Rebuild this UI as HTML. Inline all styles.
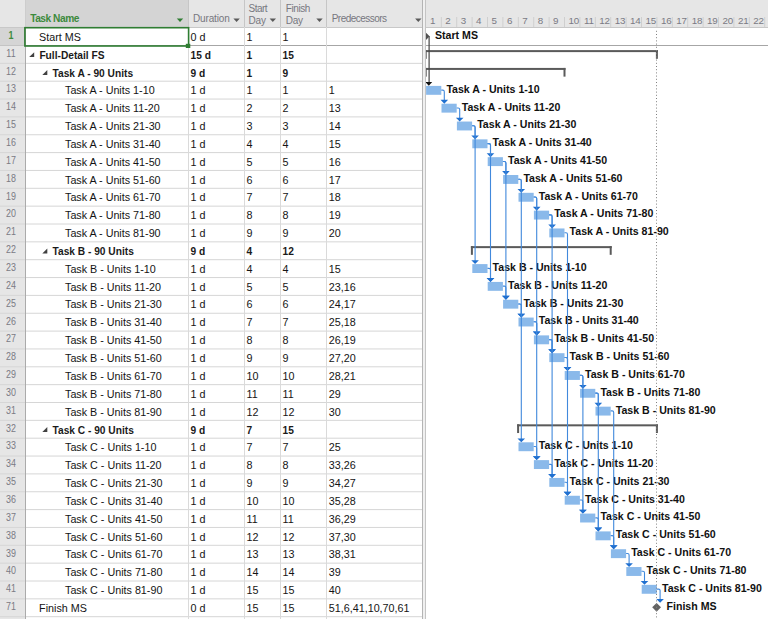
<!DOCTYPE html><html><head><meta charset="utf-8"><style>
*{margin:0;padding:0;box-sizing:border-box}
html,body{width:768px;height:619px;overflow:hidden;background:#fff;position:relative}
body{font-family:"Liberation Sans",sans-serif;}
.t{position:absolute;white-space:nowrap;line-height:14px;height:14px}
.n{font-size:10.75px;color:#141414}
.b{font-size:10.2px;font-weight:bold;color:#1a1a1a}
.id{font-size:10.5px;color:#7a7a84;width:22px;text-align:center;transform:scaleX(0.85);transform-origin:11px 0}
.h{font-size:10px;color:#77777f}
.g{font-size:10.6px;font-weight:bold;color:#111}
svg{position:absolute;left:0;top:0}
</style></head><body>
<svg width="768" height="619" viewBox="0 0 768 619"><rect x="0.00" y="0.00" width="768.00" height="27.00" fill="#e6e6e6" /><rect x="25.00" y="0.00" width="163.00" height="27.00" fill="#d4d4d4" /><rect x="0.00" y="27.00" width="25.00" height="592.00" fill="#e6e6e6" /><rect x="0.00" y="27.00" width="25.00" height="18.00" fill="#d5d5d5" /><line x1="0.00" y1="45.50" x2="422.00" y2="45.50" stroke="#d6d6d6" stroke-width="1" /><line x1="0.00" y1="63.35" x2="422.00" y2="63.35" stroke="#d6d6d6" stroke-width="1" /><line x1="0.00" y1="81.20" x2="422.00" y2="81.20" stroke="#d6d6d6" stroke-width="1" /><line x1="0.00" y1="99.05" x2="422.00" y2="99.05" stroke="#d6d6d6" stroke-width="1" /><line x1="0.00" y1="116.90" x2="422.00" y2="116.90" stroke="#d6d6d6" stroke-width="1" /><line x1="0.00" y1="134.75" x2="422.00" y2="134.75" stroke="#d6d6d6" stroke-width="1" /><line x1="0.00" y1="152.60" x2="422.00" y2="152.60" stroke="#d6d6d6" stroke-width="1" /><line x1="0.00" y1="170.45" x2="422.00" y2="170.45" stroke="#d6d6d6" stroke-width="1" /><line x1="0.00" y1="188.30" x2="422.00" y2="188.30" stroke="#d6d6d6" stroke-width="1" /><line x1="0.00" y1="206.15" x2="422.00" y2="206.15" stroke="#d6d6d6" stroke-width="1" /><line x1="0.00" y1="224.00" x2="422.00" y2="224.00" stroke="#d6d6d6" stroke-width="1" /><line x1="0.00" y1="241.85" x2="422.00" y2="241.85" stroke="#d6d6d6" stroke-width="1" /><line x1="0.00" y1="259.70" x2="422.00" y2="259.70" stroke="#d6d6d6" stroke-width="1" /><line x1="0.00" y1="277.55" x2="422.00" y2="277.55" stroke="#d6d6d6" stroke-width="1" /><line x1="0.00" y1="295.40" x2="422.00" y2="295.40" stroke="#d6d6d6" stroke-width="1" /><line x1="0.00" y1="313.25" x2="422.00" y2="313.25" stroke="#d6d6d6" stroke-width="1" /><line x1="0.00" y1="331.10" x2="422.00" y2="331.10" stroke="#d6d6d6" stroke-width="1" /><line x1="0.00" y1="348.95" x2="422.00" y2="348.95" stroke="#d6d6d6" stroke-width="1" /><line x1="0.00" y1="366.80" x2="422.00" y2="366.80" stroke="#d6d6d6" stroke-width="1" /><line x1="0.00" y1="384.65" x2="422.00" y2="384.65" stroke="#d6d6d6" stroke-width="1" /><line x1="0.00" y1="402.50" x2="422.00" y2="402.50" stroke="#d6d6d6" stroke-width="1" /><line x1="0.00" y1="420.35" x2="422.00" y2="420.35" stroke="#d6d6d6" stroke-width="1" /><line x1="0.00" y1="438.20" x2="422.00" y2="438.20" stroke="#d6d6d6" stroke-width="1" /><line x1="0.00" y1="456.05" x2="422.00" y2="456.05" stroke="#d6d6d6" stroke-width="1" /><line x1="0.00" y1="473.90" x2="422.00" y2="473.90" stroke="#d6d6d6" stroke-width="1" /><line x1="0.00" y1="491.75" x2="422.00" y2="491.75" stroke="#d6d6d6" stroke-width="1" /><line x1="0.00" y1="509.60" x2="422.00" y2="509.60" stroke="#d6d6d6" stroke-width="1" /><line x1="0.00" y1="527.45" x2="422.00" y2="527.45" stroke="#d6d6d6" stroke-width="1" /><line x1="0.00" y1="545.30" x2="422.00" y2="545.30" stroke="#d6d6d6" stroke-width="1" /><line x1="0.00" y1="563.15" x2="422.00" y2="563.15" stroke="#d6d6d6" stroke-width="1" /><line x1="0.00" y1="581.00" x2="422.00" y2="581.00" stroke="#d6d6d6" stroke-width="1" /><line x1="0.00" y1="598.85" x2="422.00" y2="598.85" stroke="#d6d6d6" stroke-width="1" /><line x1="0.00" y1="616.70" x2="422.00" y2="616.70" stroke="#d6d6d6" stroke-width="1" /><line x1="0.00" y1="634.55" x2="422.00" y2="634.55" stroke="#d6d6d6" stroke-width="1" /><line x1="0.00" y1="27.50" x2="768.00" y2="27.50" stroke="#c8c8c8" stroke-width="1" /><line x1="25.00" y1="45.50" x2="768.00" y2="45.50" stroke="#a6a6a6" stroke-width="1" /><line x1="0.00" y1="45.50" x2="25.00" y2="45.50" stroke="#c4c4c4" stroke-width="1" /><line x1="188.50" y1="27.00" x2="188.50" y2="619.00" stroke="#dadada" stroke-width="1" /><line x1="244.50" y1="27.00" x2="244.50" y2="619.00" stroke="#dadada" stroke-width="1" /><line x1="280.50" y1="27.00" x2="280.50" y2="619.00" stroke="#dadada" stroke-width="1" /><line x1="326.50" y1="27.00" x2="326.50" y2="619.00" stroke="#dadada" stroke-width="1" /><line x1="188.50" y1="0.00" x2="188.50" y2="27.00" stroke="#c6c6c6" stroke-width="1" /><line x1="244.50" y1="0.00" x2="244.50" y2="27.00" stroke="#c6c6c6" stroke-width="1" /><line x1="280.50" y1="0.00" x2="280.50" y2="27.00" stroke="#c6c6c6" stroke-width="1" /><line x1="326.50" y1="0.00" x2="326.50" y2="27.00" stroke="#c6c6c6" stroke-width="1" /><line x1="25.50" y1="27.00" x2="25.50" y2="619.00" stroke="#ababab" stroke-width="1" /><line x1="25.50" y1="0.00" x2="25.50" y2="27.00" stroke="#cdcdcd" stroke-width="1" /><rect x="422.00" y="0.00" width="4.00" height="619.00" fill="#f0f0f0" /><line x1="422.50" y1="0.00" x2="422.50" y2="619.00" stroke="#b4b4b4" stroke-width="1" /><line x1="425.50" y1="0.00" x2="425.50" y2="619.00" stroke="#c4c4c4" stroke-width="1" /><line x1="441.30" y1="17.00" x2="441.30" y2="27.00" stroke="#cfcfcf" stroke-width="1" /><line x1="456.70" y1="17.00" x2="456.70" y2="27.00" stroke="#cfcfcf" stroke-width="1" /><line x1="472.10" y1="17.00" x2="472.10" y2="27.00" stroke="#cfcfcf" stroke-width="1" /><line x1="487.50" y1="17.00" x2="487.50" y2="27.00" stroke="#cfcfcf" stroke-width="1" /><line x1="502.90" y1="17.00" x2="502.90" y2="27.00" stroke="#cfcfcf" stroke-width="1" /><line x1="518.30" y1="17.00" x2="518.30" y2="27.00" stroke="#cfcfcf" stroke-width="1" /><line x1="533.70" y1="17.00" x2="533.70" y2="27.00" stroke="#cfcfcf" stroke-width="1" /><line x1="549.10" y1="17.00" x2="549.10" y2="27.00" stroke="#cfcfcf" stroke-width="1" /><line x1="564.50" y1="17.00" x2="564.50" y2="27.00" stroke="#cfcfcf" stroke-width="1" /><line x1="579.90" y1="17.00" x2="579.90" y2="27.00" stroke="#cfcfcf" stroke-width="1" /><line x1="595.30" y1="17.00" x2="595.30" y2="27.00" stroke="#cfcfcf" stroke-width="1" /><line x1="610.70" y1="17.00" x2="610.70" y2="27.00" stroke="#cfcfcf" stroke-width="1" /><line x1="626.10" y1="17.00" x2="626.10" y2="27.00" stroke="#cfcfcf" stroke-width="1" /><line x1="641.50" y1="17.00" x2="641.50" y2="27.00" stroke="#cfcfcf" stroke-width="1" /><line x1="656.90" y1="17.00" x2="656.90" y2="27.00" stroke="#cfcfcf" stroke-width="1" /><line x1="672.30" y1="17.00" x2="672.30" y2="27.00" stroke="#cfcfcf" stroke-width="1" /><line x1="687.70" y1="17.00" x2="687.70" y2="27.00" stroke="#cfcfcf" stroke-width="1" /><line x1="703.10" y1="17.00" x2="703.10" y2="27.00" stroke="#cfcfcf" stroke-width="1" /><line x1="718.50" y1="17.00" x2="718.50" y2="27.00" stroke="#cfcfcf" stroke-width="1" /><line x1="733.90" y1="17.00" x2="733.90" y2="27.00" stroke="#cfcfcf" stroke-width="1" /><line x1="749.30" y1="17.00" x2="749.30" y2="27.00" stroke="#cfcfcf" stroke-width="1" /><line x1="764.70" y1="17.00" x2="764.70" y2="27.00" stroke="#cfcfcf" stroke-width="1" /><rect x="24.9" y="27.7" width="163.7" height="18.3" fill="none" stroke="#2f7d32" stroke-width="1.6"/><rect x="185.80" y="43.80" width="4.50" height="4.20" fill="#2f7d32" /><defs><clipPath id="gc"><rect x="426" y="28" width="342" height="591"/></clipPath></defs><g clip-path="url(#gc)"><rect x="424.70" y="50.11" width="233.20" height="2.00" fill="#5a5a5a" /><rect x="424.70" y="50.11" width="2.00" height="8.70" fill="#5a5a5a" /><rect x="655.90" y="50.11" width="2.00" height="8.70" fill="#5a5a5a" /><rect x="424.70" y="67.93" width="140.80" height="2.00" fill="#5a5a5a" /><rect x="424.70" y="67.93" width="2.00" height="8.70" fill="#5a5a5a" /><rect x="563.50" y="67.93" width="2.00" height="8.70" fill="#5a5a5a" /><rect x="470.90" y="246.13" width="140.80" height="2.00" fill="#5a5a5a" /><rect x="470.90" y="246.13" width="2.00" height="8.70" fill="#5a5a5a" /><rect x="609.70" y="246.13" width="2.00" height="8.70" fill="#5a5a5a" /><rect x="517.10" y="424.33" width="140.80" height="2.00" fill="#5a5a5a" /><rect x="517.10" y="424.33" width="2.00" height="8.70" fill="#5a5a5a" /><rect x="655.90" y="424.33" width="2.00" height="8.70" fill="#5a5a5a" /><rect x="426.10" y="85.90" width="15.20" height="8.90" fill="#8ab9ea" /><rect x="441.50" y="103.72" width="15.20" height="8.90" fill="#8ab9ea" /><rect x="456.90" y="121.54" width="15.20" height="8.90" fill="#8ab9ea" /><rect x="472.30" y="139.36" width="15.20" height="8.90" fill="#8ab9ea" /><rect x="487.70" y="157.18" width="15.20" height="8.90" fill="#8ab9ea" /><rect x="503.10" y="175.00" width="15.20" height="8.90" fill="#8ab9ea" /><rect x="518.50" y="192.82" width="15.20" height="8.90" fill="#8ab9ea" /><rect x="533.90" y="210.64" width="15.20" height="8.90" fill="#8ab9ea" /><rect x="549.30" y="228.46" width="15.20" height="8.90" fill="#8ab9ea" /><rect x="472.30" y="264.10" width="15.20" height="8.90" fill="#8ab9ea" /><rect x="487.70" y="281.92" width="15.20" height="8.90" fill="#8ab9ea" /><rect x="503.10" y="299.74" width="15.20" height="8.90" fill="#8ab9ea" /><rect x="518.50" y="317.56" width="15.20" height="8.90" fill="#8ab9ea" /><rect x="533.90" y="335.38" width="15.20" height="8.90" fill="#8ab9ea" /><rect x="549.30" y="353.20" width="15.20" height="8.90" fill="#8ab9ea" /><rect x="564.70" y="371.02" width="15.20" height="8.90" fill="#8ab9ea" /><rect x="580.10" y="388.84" width="15.20" height="8.90" fill="#8ab9ea" /><rect x="595.50" y="406.66" width="15.20" height="8.90" fill="#8ab9ea" /><rect x="518.50" y="442.30" width="15.20" height="8.90" fill="#8ab9ea" /><rect x="533.90" y="460.12" width="15.20" height="8.90" fill="#8ab9ea" /><rect x="549.30" y="477.94" width="15.20" height="8.90" fill="#8ab9ea" /><rect x="564.70" y="495.76" width="15.20" height="8.90" fill="#8ab9ea" /><rect x="580.10" y="513.58" width="15.20" height="8.90" fill="#8ab9ea" /><rect x="595.50" y="531.40" width="15.20" height="8.90" fill="#8ab9ea" /><rect x="610.90" y="549.22" width="15.20" height="8.90" fill="#8ab9ea" /><rect x="626.30" y="567.04" width="15.20" height="8.90" fill="#8ab9ea" /><rect x="641.70" y="584.86" width="15.20" height="8.90" fill="#8ab9ea" /></g></svg>
<div class="t h" style="left:30.20px;top:11.50px;font-weight:bold;color:#3c8a3c;font-size:10.2px;letter-spacing:-0.48px">Task Name</div>
<div class="t h" style="left:193.00px;top:11.50px;letter-spacing:-0.15px">Duration</div>
<div class="t h" style="left:248.50px;top:1.60px;letter-spacing:-0.52px">Start</div>
<div class="t h" style="left:248.50px;top:14.10px;letter-spacing:-0.2px">Day</div>
<div class="t h" style="left:285.70px;top:1.60px;letter-spacing:-0.4px">Finish</div>
<div class="t h" style="left:285.70px;top:14.10px;letter-spacing:-0.2px">Day</div>
<div class="t h" style="left:331.70px;top:11.50px;letter-spacing:-0.52px">Predecessors</div>
<div class="t" style="left:429.90px;top:13.6px;font-size:9.8px;letter-spacing:-0.2px;color:#7a7a84">1</div>
<div class="t" style="left:445.30px;top:13.6px;font-size:9.8px;letter-spacing:-0.2px;color:#7a7a84">2</div>
<div class="t" style="left:460.70px;top:13.6px;font-size:9.8px;letter-spacing:-0.2px;color:#7a7a84">3</div>
<div class="t" style="left:476.10px;top:13.6px;font-size:9.8px;letter-spacing:-0.2px;color:#7a7a84">4</div>
<div class="t" style="left:491.50px;top:13.6px;font-size:9.8px;letter-spacing:-0.2px;color:#7a7a84">5</div>
<div class="t" style="left:506.90px;top:13.6px;font-size:9.8px;letter-spacing:-0.2px;color:#7a7a84">6</div>
<div class="t" style="left:522.30px;top:13.6px;font-size:9.8px;letter-spacing:-0.2px;color:#7a7a84">7</div>
<div class="t" style="left:537.70px;top:13.6px;font-size:9.8px;letter-spacing:-0.2px;color:#7a7a84">8</div>
<div class="t" style="left:553.10px;top:13.6px;font-size:9.8px;letter-spacing:-0.2px;color:#7a7a84">9</div>
<div class="t" style="left:568.50px;top:13.6px;font-size:9.8px;letter-spacing:-0.2px;color:#7a7a84">10</div>
<div class="t" style="left:583.90px;top:13.6px;font-size:9.8px;letter-spacing:-0.2px;color:#7a7a84">11</div>
<div class="t" style="left:599.30px;top:13.6px;font-size:9.8px;letter-spacing:-0.2px;color:#7a7a84">12</div>
<div class="t" style="left:614.70px;top:13.6px;font-size:9.8px;letter-spacing:-0.2px;color:#7a7a84">13</div>
<div class="t" style="left:630.10px;top:13.6px;font-size:9.8px;letter-spacing:-0.2px;color:#7a7a84">14</div>
<div class="t" style="left:645.50px;top:13.6px;font-size:9.8px;letter-spacing:-0.2px;color:#7a7a84">15</div>
<div class="t" style="left:660.90px;top:13.6px;font-size:9.8px;letter-spacing:-0.2px;color:#7a7a84">16</div>
<div class="t" style="left:676.30px;top:13.6px;font-size:9.8px;letter-spacing:-0.2px;color:#7a7a84">17</div>
<div class="t" style="left:691.70px;top:13.6px;font-size:9.8px;letter-spacing:-0.2px;color:#7a7a84">18</div>
<div class="t" style="left:707.10px;top:13.6px;font-size:9.8px;letter-spacing:-0.2px;color:#7a7a84">19</div>
<div class="t" style="left:722.50px;top:13.6px;font-size:9.8px;letter-spacing:-0.2px;color:#7a7a84">20</div>
<div class="t" style="left:737.90px;top:13.6px;font-size:9.8px;letter-spacing:-0.2px;color:#7a7a84">21</div>
<div class="t" style="left:753.30px;top:13.6px;font-size:9.8px;letter-spacing:-0.2px;color:#7a7a84">22</div>
<div class="t id" style="left:0.00px;top:27.90px;color:#3c8a3c;font-weight:bold">1</div>
<div class="t n" style="left:39.10px;top:29.70px;">Start MS</div>
<div class="t n" style="left:190.60px;top:29.70px;">0 d</div>
<div class="t n" style="left:246.50px;top:29.70px;">1</div>
<div class="t n" style="left:282.60px;top:29.70px;">1</div>
<div class="t g" style="left:435.00px;top:28.29px;">Start MS</div>
<div class="t id" style="left:0.00px;top:45.75px;">11</div>
<div class="t b" style="left:39.40px;top:48.75px;">Full-Detail FS</div>
<div class="t b" style="left:190.60px;top:48.75px;">15 d</div>
<div class="t b" style="left:246.50px;top:48.75px;">1</div>
<div class="t b" style="left:282.60px;top:48.75px;">15</div>
<div class="t id" style="left:0.00px;top:63.60px;">12</div>
<div class="t b" style="left:52.50px;top:66.60px;">Task A - 90 Units</div>
<div class="t b" style="left:190.60px;top:66.60px;">9 d</div>
<div class="t b" style="left:246.50px;top:66.60px;">1</div>
<div class="t b" style="left:282.60px;top:66.60px;">9</div>
<div class="t id" style="left:0.00px;top:81.45px;">13</div>
<div class="t n" style="left:65.00px;top:83.25px;">Task A - Units 1-10</div>
<div class="t n" style="left:190.60px;top:83.25px;">1 d</div>
<div class="t n" style="left:246.50px;top:83.25px;">1</div>
<div class="t n" style="left:282.60px;top:83.25px;">1</div>
<div class="t n" style="left:328.80px;top:83.25px;">1</div>
<div class="t g" style="left:446.40px;top:81.75px;">Task A - Units 1-10</div>
<div class="t id" style="left:0.00px;top:99.30px;">14</div>
<div class="t n" style="left:65.00px;top:101.10px;">Task A - Units 11-20</div>
<div class="t n" style="left:190.60px;top:101.10px;">1 d</div>
<div class="t n" style="left:246.50px;top:101.10px;">2</div>
<div class="t n" style="left:282.60px;top:101.10px;">2</div>
<div class="t n" style="left:328.80px;top:101.10px;">13</div>
<div class="t g" style="left:461.80px;top:99.57px;">Task A - Units 11-20</div>
<div class="t id" style="left:0.00px;top:117.15px;">15</div>
<div class="t n" style="left:65.00px;top:118.95px;">Task A - Units 21-30</div>
<div class="t n" style="left:190.60px;top:118.95px;">1 d</div>
<div class="t n" style="left:246.50px;top:118.95px;">3</div>
<div class="t n" style="left:282.60px;top:118.95px;">3</div>
<div class="t n" style="left:328.80px;top:118.95px;">14</div>
<div class="t g" style="left:477.20px;top:117.39px;">Task A - Units 21-30</div>
<div class="t id" style="left:0.00px;top:135.00px;">16</div>
<div class="t n" style="left:65.00px;top:136.80px;">Task A - Units 31-40</div>
<div class="t n" style="left:190.60px;top:136.80px;">1 d</div>
<div class="t n" style="left:246.50px;top:136.80px;">4</div>
<div class="t n" style="left:282.60px;top:136.80px;">4</div>
<div class="t n" style="left:328.80px;top:136.80px;">15</div>
<div class="t g" style="left:492.60px;top:135.21px;">Task A - Units 31-40</div>
<div class="t id" style="left:0.00px;top:152.85px;">17</div>
<div class="t n" style="left:65.00px;top:154.65px;">Task A - Units 41-50</div>
<div class="t n" style="left:190.60px;top:154.65px;">1 d</div>
<div class="t n" style="left:246.50px;top:154.65px;">5</div>
<div class="t n" style="left:282.60px;top:154.65px;">5</div>
<div class="t n" style="left:328.80px;top:154.65px;">16</div>
<div class="t g" style="left:508.00px;top:153.03px;">Task A - Units 41-50</div>
<div class="t id" style="left:0.00px;top:170.70px;">18</div>
<div class="t n" style="left:65.00px;top:172.50px;">Task A - Units 51-60</div>
<div class="t n" style="left:190.60px;top:172.50px;">1 d</div>
<div class="t n" style="left:246.50px;top:172.50px;">6</div>
<div class="t n" style="left:282.60px;top:172.50px;">6</div>
<div class="t n" style="left:328.80px;top:172.50px;">17</div>
<div class="t g" style="left:523.40px;top:170.85px;">Task A - Units 51-60</div>
<div class="t id" style="left:0.00px;top:188.55px;">19</div>
<div class="t n" style="left:65.00px;top:190.35px;">Task A - Units 61-70</div>
<div class="t n" style="left:190.60px;top:190.35px;">1 d</div>
<div class="t n" style="left:246.50px;top:190.35px;">7</div>
<div class="t n" style="left:282.60px;top:190.35px;">7</div>
<div class="t n" style="left:328.80px;top:190.35px;">18</div>
<div class="t g" style="left:538.80px;top:188.67px;">Task A - Units 61-70</div>
<div class="t id" style="left:0.00px;top:206.40px;">20</div>
<div class="t n" style="left:65.00px;top:208.20px;">Task A - Units 71-80</div>
<div class="t n" style="left:190.60px;top:208.20px;">1 d</div>
<div class="t n" style="left:246.50px;top:208.20px;">8</div>
<div class="t n" style="left:282.60px;top:208.20px;">8</div>
<div class="t n" style="left:328.80px;top:208.20px;">19</div>
<div class="t g" style="left:554.20px;top:206.49px;">Task A - Units 71-80</div>
<div class="t id" style="left:0.00px;top:224.25px;">21</div>
<div class="t n" style="left:65.00px;top:226.05px;">Task A - Units 81-90</div>
<div class="t n" style="left:190.60px;top:226.05px;">1 d</div>
<div class="t n" style="left:246.50px;top:226.05px;">9</div>
<div class="t n" style="left:282.60px;top:226.05px;">9</div>
<div class="t n" style="left:328.80px;top:226.05px;">20</div>
<div class="t g" style="left:569.60px;top:224.31px;">Task A - Units 81-90</div>
<div class="t id" style="left:0.00px;top:242.10px;">22</div>
<div class="t b" style="left:52.50px;top:245.10px;">Task B - 90 Units</div>
<div class="t b" style="left:190.60px;top:245.10px;">9 d</div>
<div class="t b" style="left:246.50px;top:245.10px;">4</div>
<div class="t b" style="left:282.60px;top:245.10px;">12</div>
<div class="t id" style="left:0.00px;top:259.95px;">23</div>
<div class="t n" style="left:65.00px;top:261.75px;">Task B - Units 1-10</div>
<div class="t n" style="left:190.60px;top:261.75px;">1 d</div>
<div class="t n" style="left:246.50px;top:261.75px;">4</div>
<div class="t n" style="left:282.60px;top:261.75px;">4</div>
<div class="t n" style="left:328.80px;top:261.75px;">15</div>
<div class="t g" style="left:492.60px;top:259.95px;">Task B - Units 1-10</div>
<div class="t id" style="left:0.00px;top:277.80px;">24</div>
<div class="t n" style="left:65.00px;top:279.60px;">Task B - Units 11-20</div>
<div class="t n" style="left:190.60px;top:279.60px;">1 d</div>
<div class="t n" style="left:246.50px;top:279.60px;">5</div>
<div class="t n" style="left:282.60px;top:279.60px;">5</div>
<div class="t n" style="left:328.80px;top:279.60px;">23,16</div>
<div class="t g" style="left:508.00px;top:277.77px;">Task B - Units 11-20</div>
<div class="t id" style="left:0.00px;top:295.65px;">25</div>
<div class="t n" style="left:65.00px;top:297.45px;">Task B - Units 21-30</div>
<div class="t n" style="left:190.60px;top:297.45px;">1 d</div>
<div class="t n" style="left:246.50px;top:297.45px;">6</div>
<div class="t n" style="left:282.60px;top:297.45px;">6</div>
<div class="t n" style="left:328.80px;top:297.45px;">24,17</div>
<div class="t g" style="left:523.40px;top:295.59px;">Task B - Units 21-30</div>
<div class="t id" style="left:0.00px;top:313.50px;">26</div>
<div class="t n" style="left:65.00px;top:315.30px;">Task B - Units 31-40</div>
<div class="t n" style="left:190.60px;top:315.30px;">1 d</div>
<div class="t n" style="left:246.50px;top:315.30px;">7</div>
<div class="t n" style="left:282.60px;top:315.30px;">7</div>
<div class="t n" style="left:328.80px;top:315.30px;">25,18</div>
<div class="t g" style="left:538.80px;top:313.41px;">Task B - Units 31-40</div>
<div class="t id" style="left:0.00px;top:331.35px;">27</div>
<div class="t n" style="left:65.00px;top:333.15px;">Task B - Units 41-50</div>
<div class="t n" style="left:190.60px;top:333.15px;">1 d</div>
<div class="t n" style="left:246.50px;top:333.15px;">8</div>
<div class="t n" style="left:282.60px;top:333.15px;">8</div>
<div class="t n" style="left:328.80px;top:333.15px;">26,19</div>
<div class="t g" style="left:554.20px;top:331.23px;">Task B - Units 41-50</div>
<div class="t id" style="left:0.00px;top:349.20px;">28</div>
<div class="t n" style="left:65.00px;top:351.00px;">Task B - Units 51-60</div>
<div class="t n" style="left:190.60px;top:351.00px;">1 d</div>
<div class="t n" style="left:246.50px;top:351.00px;">9</div>
<div class="t n" style="left:282.60px;top:351.00px;">9</div>
<div class="t n" style="left:328.80px;top:351.00px;">27,20</div>
<div class="t g" style="left:569.60px;top:349.05px;">Task B - Units 51-60</div>
<div class="t id" style="left:0.00px;top:367.05px;">29</div>
<div class="t n" style="left:65.00px;top:368.85px;">Task B - Units 61-70</div>
<div class="t n" style="left:190.60px;top:368.85px;">1 d</div>
<div class="t n" style="left:246.50px;top:368.85px;">10</div>
<div class="t n" style="left:282.60px;top:368.85px;">10</div>
<div class="t n" style="left:328.80px;top:368.85px;">28,21</div>
<div class="t g" style="left:585.00px;top:366.87px;">Task B - Units 61-70</div>
<div class="t id" style="left:0.00px;top:384.90px;">30</div>
<div class="t n" style="left:65.00px;top:386.70px;">Task B - Units 71-80</div>
<div class="t n" style="left:190.60px;top:386.70px;">1 d</div>
<div class="t n" style="left:246.50px;top:386.70px;">11</div>
<div class="t n" style="left:282.60px;top:386.70px;">11</div>
<div class="t n" style="left:328.80px;top:386.70px;">29</div>
<div class="t g" style="left:600.40px;top:384.69px;">Task B - Units 71-80</div>
<div class="t id" style="left:0.00px;top:402.75px;">31</div>
<div class="t n" style="left:65.00px;top:404.55px;">Task B - Units 81-90</div>
<div class="t n" style="left:190.60px;top:404.55px;">1 d</div>
<div class="t n" style="left:246.50px;top:404.55px;">12</div>
<div class="t n" style="left:282.60px;top:404.55px;">12</div>
<div class="t n" style="left:328.80px;top:404.55px;">30</div>
<div class="t g" style="left:615.80px;top:402.51px;">Task B - Units 81-90</div>
<div class="t id" style="left:0.00px;top:420.60px;">32</div>
<div class="t b" style="left:52.50px;top:423.60px;">Task C - 90 Units</div>
<div class="t b" style="left:190.60px;top:423.60px;">9 d</div>
<div class="t b" style="left:246.50px;top:423.60px;">7</div>
<div class="t b" style="left:282.60px;top:423.60px;">15</div>
<div class="t id" style="left:0.00px;top:438.45px;">33</div>
<div class="t n" style="left:65.00px;top:440.25px;">Task C - Units 1-10</div>
<div class="t n" style="left:190.60px;top:440.25px;">1 d</div>
<div class="t n" style="left:246.50px;top:440.25px;">7</div>
<div class="t n" style="left:282.60px;top:440.25px;">7</div>
<div class="t n" style="left:328.80px;top:440.25px;">25</div>
<div class="t g" style="left:538.80px;top:438.15px;">Task C - Units 1-10</div>
<div class="t id" style="left:0.00px;top:456.30px;">34</div>
<div class="t n" style="left:65.00px;top:458.10px;">Task C - Units 11-20</div>
<div class="t n" style="left:190.60px;top:458.10px;">1 d</div>
<div class="t n" style="left:246.50px;top:458.10px;">8</div>
<div class="t n" style="left:282.60px;top:458.10px;">8</div>
<div class="t n" style="left:328.80px;top:458.10px;">33,26</div>
<div class="t g" style="left:554.20px;top:455.97px;">Task C - Units 11-20</div>
<div class="t id" style="left:0.00px;top:474.15px;">35</div>
<div class="t n" style="left:65.00px;top:475.95px;">Task C - Units 21-30</div>
<div class="t n" style="left:190.60px;top:475.95px;">1 d</div>
<div class="t n" style="left:246.50px;top:475.95px;">9</div>
<div class="t n" style="left:282.60px;top:475.95px;">9</div>
<div class="t n" style="left:328.80px;top:475.95px;">34,27</div>
<div class="t g" style="left:569.60px;top:473.79px;">Task C - Units 21-30</div>
<div class="t id" style="left:0.00px;top:492.00px;">36</div>
<div class="t n" style="left:65.00px;top:493.80px;">Task C - Units 31-40</div>
<div class="t n" style="left:190.60px;top:493.80px;">1 d</div>
<div class="t n" style="left:246.50px;top:493.80px;">10</div>
<div class="t n" style="left:282.60px;top:493.80px;">10</div>
<div class="t n" style="left:328.80px;top:493.80px;">35,28</div>
<div class="t g" style="left:585.00px;top:491.61px;">Task C - Units 31-40</div>
<div class="t id" style="left:0.00px;top:509.85px;">37</div>
<div class="t n" style="left:65.00px;top:511.65px;">Task C - Units 41-50</div>
<div class="t n" style="left:190.60px;top:511.65px;">1 d</div>
<div class="t n" style="left:246.50px;top:511.65px;">11</div>
<div class="t n" style="left:282.60px;top:511.65px;">11</div>
<div class="t n" style="left:328.80px;top:511.65px;">36,29</div>
<div class="t g" style="left:600.40px;top:509.43px;">Task C - Units 41-50</div>
<div class="t id" style="left:0.00px;top:527.70px;">38</div>
<div class="t n" style="left:65.00px;top:529.50px;">Task C - Units 51-60</div>
<div class="t n" style="left:190.60px;top:529.50px;">1 d</div>
<div class="t n" style="left:246.50px;top:529.50px;">12</div>
<div class="t n" style="left:282.60px;top:529.50px;">12</div>
<div class="t n" style="left:328.80px;top:529.50px;">37,30</div>
<div class="t g" style="left:615.80px;top:527.25px;">Task C - Units 51-60</div>
<div class="t id" style="left:0.00px;top:545.55px;">39</div>
<div class="t n" style="left:65.00px;top:547.35px;">Task C - Units 61-70</div>
<div class="t n" style="left:190.60px;top:547.35px;">1 d</div>
<div class="t n" style="left:246.50px;top:547.35px;">13</div>
<div class="t n" style="left:282.60px;top:547.35px;">13</div>
<div class="t n" style="left:328.80px;top:547.35px;">38,31</div>
<div class="t g" style="left:631.20px;top:545.07px;">Task C - Units 61-70</div>
<div class="t id" style="left:0.00px;top:563.40px;">40</div>
<div class="t n" style="left:65.00px;top:565.20px;">Task C - Units 71-80</div>
<div class="t n" style="left:190.60px;top:565.20px;">1 d</div>
<div class="t n" style="left:246.50px;top:565.20px;">14</div>
<div class="t n" style="left:282.60px;top:565.20px;">14</div>
<div class="t n" style="left:328.80px;top:565.20px;">39</div>
<div class="t g" style="left:646.60px;top:562.89px;">Task C - Units 71-80</div>
<div class="t id" style="left:0.00px;top:581.25px;">41</div>
<div class="t n" style="left:65.00px;top:583.05px;">Task C - Units 81-90</div>
<div class="t n" style="left:190.60px;top:583.05px;">1 d</div>
<div class="t n" style="left:246.50px;top:583.05px;">15</div>
<div class="t n" style="left:282.60px;top:583.05px;">15</div>
<div class="t n" style="left:328.80px;top:583.05px;">40</div>
<div class="t g" style="left:662.00px;top:580.71px;">Task C - Units 81-90</div>
<div class="t id" style="left:0.00px;top:599.10px;">71</div>
<div class="t n" style="left:39.10px;top:600.90px;">Finish MS</div>
<div class="t n" style="left:190.60px;top:600.90px;">0 d</div>
<div class="t n" style="left:246.50px;top:600.90px;">15</div>
<div class="t n" style="left:282.60px;top:600.90px;">15</div>
<div class="t n" style="left:328.80px;top:600.90px;">51,6,41,10,70,61</div>
<div class="t g" style="left:666.50px;top:598.53px;">Finish MS</div>
<svg width="768" height="619" viewBox="0 0 768 619"><defs><clipPath id="gc2"><rect x="426" y="28" width="342" height="591"/></clipPath></defs><g clip-path="url(#gc2)"><path d="M441.30,90.15 H442.80 Q444.30,90.15 444.30,91.65 V100.72" fill="none" stroke="#4189dc" stroke-width="1.1"/><path d="M440.50,99.82 L448.10,99.82 L444.30,103.72 Z" fill="#2070d0"/><path d="M456.70,107.97 H458.20 Q459.70,107.97 459.70,109.47 V118.54" fill="none" stroke="#4189dc" stroke-width="1.1"/><path d="M455.90,117.64 L463.50,117.64 L459.70,121.54 Z" fill="#2070d0"/><path d="M472.10,125.79 H473.60 Q475.10,125.79 475.10,127.29 V136.36" fill="none" stroke="#4189dc" stroke-width="1.1"/><path d="M471.30,135.46 L478.90,135.46 L475.10,139.36 Z" fill="#2070d0"/><path d="M487.50,143.61 H489.00 Q490.50,143.61 490.50,145.11 V154.18" fill="none" stroke="#4189dc" stroke-width="1.1"/><path d="M486.70,153.28 L494.30,153.28 L490.50,157.18 Z" fill="#2070d0"/><path d="M502.90,161.43 H504.40 Q505.90,161.43 505.90,162.93 V172.00" fill="none" stroke="#4189dc" stroke-width="1.1"/><path d="M502.10,171.10 L509.70,171.10 L505.90,175.00 Z" fill="#2070d0"/><path d="M518.30,179.25 H519.80 Q521.30,179.25 521.30,180.75 V189.82" fill="none" stroke="#4189dc" stroke-width="1.1"/><path d="M517.50,188.92 L525.10,188.92 L521.30,192.82 Z" fill="#2070d0"/><path d="M533.70,197.07 H535.20 Q536.70,197.07 536.70,198.57 V207.64" fill="none" stroke="#4189dc" stroke-width="1.1"/><path d="M532.90,206.74 L540.50,206.74 L536.70,210.64 Z" fill="#2070d0"/><path d="M549.10,214.89 H550.60 Q552.10,214.89 552.10,216.39 V225.46" fill="none" stroke="#4189dc" stroke-width="1.1"/><path d="M548.30,224.56 L555.90,224.56 L552.10,228.46 Z" fill="#2070d0"/><path d="M472.10,125.79 H473.60 Q475.10,125.79 475.10,127.29 V261.10" fill="none" stroke="#4189dc" stroke-width="1.1"/><path d="M471.30,260.20 L478.90,260.20 L475.10,264.10 Z" fill="#2070d0"/><path d="M487.50,268.35 H489.00 Q490.50,268.35 490.50,269.85 V278.92" fill="none" stroke="#4189dc" stroke-width="1.1"/><path d="M486.70,278.02 L494.30,278.02 L490.50,281.92 Z" fill="#2070d0"/><path d="M487.50,143.61 H489.00 Q490.50,143.61 490.50,145.11 V278.92" fill="none" stroke="#4189dc" stroke-width="1.1"/><path d="M486.70,278.02 L494.30,278.02 L490.50,281.92 Z" fill="#2070d0"/><path d="M502.90,286.17 H504.40 Q505.90,286.17 505.90,287.67 V296.74" fill="none" stroke="#4189dc" stroke-width="1.1"/><path d="M502.10,295.84 L509.70,295.84 L505.90,299.74 Z" fill="#2070d0"/><path d="M502.90,161.43 H504.40 Q505.90,161.43 505.90,162.93 V296.74" fill="none" stroke="#4189dc" stroke-width="1.1"/><path d="M502.10,295.84 L509.70,295.84 L505.90,299.74 Z" fill="#2070d0"/><path d="M518.30,303.99 H519.80 Q521.30,303.99 521.30,305.49 V314.56" fill="none" stroke="#4189dc" stroke-width="1.1"/><path d="M517.50,313.66 L525.10,313.66 L521.30,317.56 Z" fill="#2070d0"/><path d="M518.30,179.25 H519.80 Q521.30,179.25 521.30,180.75 V314.56" fill="none" stroke="#4189dc" stroke-width="1.1"/><path d="M517.50,313.66 L525.10,313.66 L521.30,317.56 Z" fill="#2070d0"/><path d="M533.70,321.81 H535.20 Q536.70,321.81 536.70,323.31 V332.38" fill="none" stroke="#4189dc" stroke-width="1.1"/><path d="M532.90,331.48 L540.50,331.48 L536.70,335.38 Z" fill="#2070d0"/><path d="M533.70,197.07 H535.20 Q536.70,197.07 536.70,198.57 V332.38" fill="none" stroke="#4189dc" stroke-width="1.1"/><path d="M532.90,331.48 L540.50,331.48 L536.70,335.38 Z" fill="#2070d0"/><path d="M549.10,339.63 H550.60 Q552.10,339.63 552.10,341.13 V350.20" fill="none" stroke="#4189dc" stroke-width="1.1"/><path d="M548.30,349.30 L555.90,349.30 L552.10,353.20 Z" fill="#2070d0"/><path d="M549.10,214.89 H550.60 Q552.10,214.89 552.10,216.39 V350.20" fill="none" stroke="#4189dc" stroke-width="1.1"/><path d="M548.30,349.30 L555.90,349.30 L552.10,353.20 Z" fill="#2070d0"/><path d="M564.50,357.45 H566.00 Q567.50,357.45 567.50,358.95 V368.02" fill="none" stroke="#4189dc" stroke-width="1.1"/><path d="M563.70,367.12 L571.30,367.12 L567.50,371.02 Z" fill="#2070d0"/><path d="M564.50,232.71 H566.00 Q567.50,232.71 567.50,234.21 V368.02" fill="none" stroke="#4189dc" stroke-width="1.1"/><path d="M563.70,367.12 L571.30,367.12 L567.50,371.02 Z" fill="#2070d0"/><path d="M579.90,375.27 H581.40 Q582.90,375.27 582.90,376.77 V385.84" fill="none" stroke="#4189dc" stroke-width="1.1"/><path d="M579.10,384.94 L586.70,384.94 L582.90,388.84 Z" fill="#2070d0"/><path d="M595.30,393.09 H596.80 Q598.30,393.09 598.30,394.59 V403.66" fill="none" stroke="#4189dc" stroke-width="1.1"/><path d="M594.50,402.76 L602.10,402.76 L598.30,406.66 Z" fill="#2070d0"/><path d="M518.30,303.99 H519.80 Q521.30,303.99 521.30,305.49 V439.30" fill="none" stroke="#4189dc" stroke-width="1.1"/><path d="M517.50,438.40 L525.10,438.40 L521.30,442.30 Z" fill="#2070d0"/><path d="M533.70,446.55 H535.20 Q536.70,446.55 536.70,448.05 V457.12" fill="none" stroke="#4189dc" stroke-width="1.1"/><path d="M532.90,456.22 L540.50,456.22 L536.70,460.12 Z" fill="#2070d0"/><path d="M533.70,321.81 H535.20 Q536.70,321.81 536.70,323.31 V457.12" fill="none" stroke="#4189dc" stroke-width="1.1"/><path d="M532.90,456.22 L540.50,456.22 L536.70,460.12 Z" fill="#2070d0"/><path d="M549.10,464.37 H550.60 Q552.10,464.37 552.10,465.87 V474.94" fill="none" stroke="#4189dc" stroke-width="1.1"/><path d="M548.30,474.04 L555.90,474.04 L552.10,477.94 Z" fill="#2070d0"/><path d="M549.10,339.63 H550.60 Q552.10,339.63 552.10,341.13 V474.94" fill="none" stroke="#4189dc" stroke-width="1.1"/><path d="M548.30,474.04 L555.90,474.04 L552.10,477.94 Z" fill="#2070d0"/><path d="M564.50,482.19 H566.00 Q567.50,482.19 567.50,483.69 V492.76" fill="none" stroke="#4189dc" stroke-width="1.1"/><path d="M563.70,491.86 L571.30,491.86 L567.50,495.76 Z" fill="#2070d0"/><path d="M564.50,357.45 H566.00 Q567.50,357.45 567.50,358.95 V492.76" fill="none" stroke="#4189dc" stroke-width="1.1"/><path d="M563.70,491.86 L571.30,491.86 L567.50,495.76 Z" fill="#2070d0"/><path d="M579.90,500.01 H581.40 Q582.90,500.01 582.90,501.51 V510.58" fill="none" stroke="#4189dc" stroke-width="1.1"/><path d="M579.10,509.68 L586.70,509.68 L582.90,513.58 Z" fill="#2070d0"/><path d="M579.90,375.27 H581.40 Q582.90,375.27 582.90,376.77 V510.58" fill="none" stroke="#4189dc" stroke-width="1.1"/><path d="M579.10,509.68 L586.70,509.68 L582.90,513.58 Z" fill="#2070d0"/><path d="M595.30,517.83 H596.80 Q598.30,517.83 598.30,519.33 V528.40" fill="none" stroke="#4189dc" stroke-width="1.1"/><path d="M594.50,527.50 L602.10,527.50 L598.30,531.40 Z" fill="#2070d0"/><path d="M595.30,393.09 H596.80 Q598.30,393.09 598.30,394.59 V528.40" fill="none" stroke="#4189dc" stroke-width="1.1"/><path d="M594.50,527.50 L602.10,527.50 L598.30,531.40 Z" fill="#2070d0"/><path d="M610.70,535.65 H612.20 Q613.70,535.65 613.70,537.15 V546.22" fill="none" stroke="#4189dc" stroke-width="1.1"/><path d="M609.90,545.32 L617.50,545.32 L613.70,549.22 Z" fill="#2070d0"/><path d="M610.70,410.91 H612.20 Q613.70,410.91 613.70,412.41 V546.22" fill="none" stroke="#4189dc" stroke-width="1.1"/><path d="M609.90,545.32 L617.50,545.32 L613.70,549.22 Z" fill="#2070d0"/><path d="M626.10,553.47 H627.60 Q629.10,553.47 629.10,554.97 V564.04" fill="none" stroke="#4189dc" stroke-width="1.1"/><path d="M625.30,563.14 L632.90,563.14 L629.10,567.04 Z" fill="#2070d0"/><path d="M641.50,571.29 H643.00 Q644.50,571.29 644.50,572.79 V581.86" fill="none" stroke="#4189dc" stroke-width="1.1"/><path d="M640.70,580.96 L648.30,580.96 L644.50,584.86 Z" fill="#2070d0"/><path d="M656.90,589.11 H658.60 Q660.10,589.11 660.10,590.61 V599.83" fill="none" stroke="#4189dc" stroke-width="1.1"/><path d="M656.30,598.93 L663.90,598.93 L660.10,602.83 Z" fill="#2070d0"/><line x1="429.10" y1="36" x2="429.10" y2="83" stroke="#444" stroke-width="1.2"/><path d="M425.40,82.05 L432.20,82.05 L428.80,85.85 Z" fill="#111"/><path d="M425.60,32.29 L429.60,36.29 L425.60,40.29 L421.60,36.29 Z" fill="#505050"/><path d="M656.60,602.90 L661.00,607.30 L656.60,611.70 L652.20,607.30 Z" fill="#636363"/><line x1="656.5" y1="30.8" x2="656.5" y2="619" stroke="#808080" stroke-width="1" stroke-dasharray="1 2.2"/></g><path d="M176.80,18.60 h6.4 l-3.2,3.5 z" fill="#2f7d32"/><path d="M233.40,18.60 h6.4 l-3.2,3.5 z" fill="#5a5a5a"/><path d="M269.60,18.60 h6.4 l-3.2,3.5 z" fill="#5a5a5a"/><path d="M316.30,18.60 h6.4 l-3.2,3.5 z" fill="#5a5a5a"/><path d="M415.10,18.60 h6.4 l-3.2,3.5 z" fill="#5a5a5a"/><path d="M34.20,52.15 L34.20,57.05 L29.20,57.05 Z" fill="#404040"/><path d="M47.30,70.00 L47.30,74.90 L42.30,74.90 Z" fill="#404040"/><path d="M47.30,248.50 L47.30,253.40 L42.30,253.40 Z" fill="#404040"/><path d="M47.30,427.00 L47.30,431.90 L42.30,431.90 Z" fill="#404040"/></svg>
</body></html>
